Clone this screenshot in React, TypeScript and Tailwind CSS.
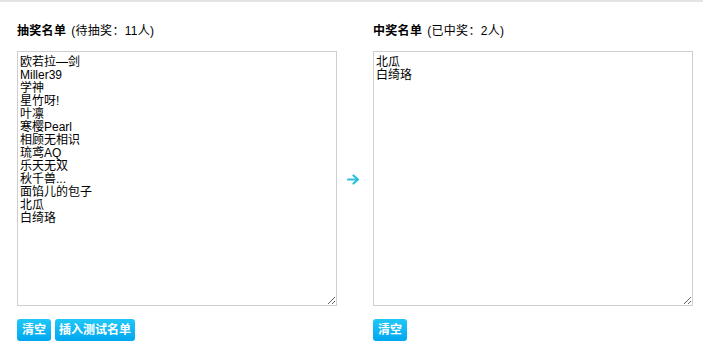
import React from "react";

const font = { fontFamily: '"Liberation Sans", "Noto Sans CJK SC", sans-serif' };

const left = ["欧若拉—剑", "Miller39", "学神", "星竹呀!", "叶凛", "寒樱Pearl", "相顾无相识", "琉鸢AQ", "乐天无双", "秋千兽...", "面馅儿的包子", "北瓜", "白绮珞"].join("\n");
const right = ["北瓜", "白绮珞"].join("\n");

function Btn({ children, w }: { children: React.ReactNode; w: string }) {
  return (
    <button
      className={`h-[22px] ${w} rounded-[3px] bg-gradient-to-b from-[#20c8f6] to-[#00a6f0] text-[12px] font-bold text-white leading-[22px] text-center`}
    >
      {children}
    </button>
  );
}

function Panel({ title, sub, value, buttons }: { title: string; sub: string; value: string; buttons: React.ReactNode }) {
  return (
    <div className="flex flex-col w-[320px]">
      <div className="h-[20px] text-[12px] leading-[20px] text-black tracking-[0.3px]">
        <span className="font-bold">{title}</span>
        <span className="ml-[5px]">{sub}</span>
      </div>
      <textarea
        readOnly
        value={value}
        className="mt-[10px] h-[255px] w-[320px] border border-[#cfcfcf] px-[2px] pt-[4px] pb-[2px] text-[12px] leading-[13px] text-black resize-y outline-none"
        style={font}
      />
      <div className="mt-[13px] flex gap-[4px]">{buttons}</div>
    </div>
  );
}

export default function App() {
  return (
    <div className="w-[703px] h-[364px] bg-white border-t-2 border-[#e3e3e3]" style={font}>
      <div className="flex pl-[17px] pt-[19px]">
        <Panel
          title="抽奖名单"
          sub="(待抽奖：11人)"
          value={left}
          buttons={
            <>
              <Btn w="w-[34px]">清空</Btn>
              <Btn w="w-[80px]">插入测试名单</Btn>
            </>
          }
        />
        <div className="w-[36px] flex items-start justify-center pt-[153px]">
          <svg width="13" height="11" viewBox="0 0 13 11" className="ml-[-4px]">
            <path d="M1 5.5 H10" stroke="#2fbfdc" strokeWidth="2.2" strokeLinecap="round" />
            <path d="M6.5 1.5 L11 5.5 L6.5 9.5" stroke="#2fbfdc" strokeWidth="2.2" fill="none" strokeLinecap="round" strokeLinejoin="round" />
          </svg>
        </div>
        <Panel
          title="中奖名单"
          sub="(已中奖：2人)"
          value={right}
          buttons={<Btn w="w-[34px]">清空</Btn>}
        />
      </div>
    </div>
  );
}
